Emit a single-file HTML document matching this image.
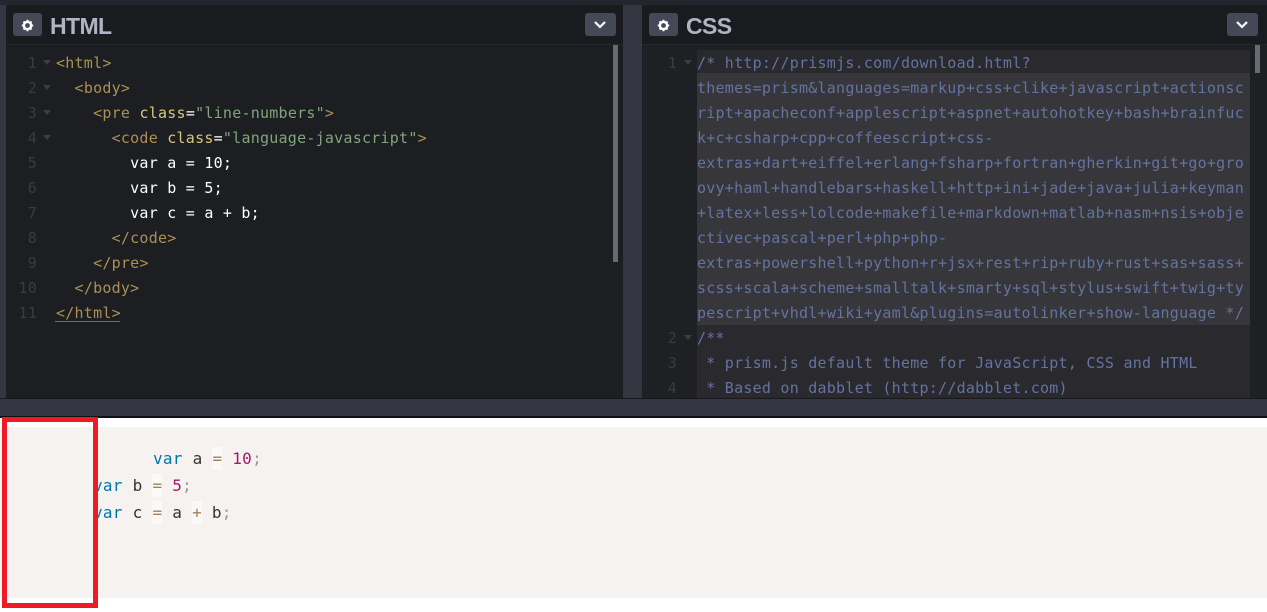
<!DOCTYPE html>
<html><head><meta charset="utf-8"><style>
html,body{margin:0;padding:0;width:1267px;height:612px;overflow:hidden;background:#fff}
div{position:absolute}
.c{font:15px/25px "DejaVu Sans Mono","Liberation Mono",monospace;letter-spacing:.24px;white-space:pre}
.n{width:40px;text-align:right;color:#3a3b42}
.t{color:#ac8f55}.a{color:#d5c77f}.v{color:#80a57c}.w{color:#fff}.e{color:#d0d0d0}
.m{color:#6472a0}
.f{width:0;height:0;border:4px solid transparent;border-top:5px solid #3c3d44;border-bottom:0}
.h{font:bold 23px/30px "Liberation Sans",sans-serif;color:#b0b3c2;letter-spacing:-.6px}
.b{background:#444857;border-radius:3px}
.p{font:16px/27px "DejaVu Sans Mono","Liberation Mono",monospace;letter-spacing:.27px;white-space:pre;color:#333}
.p i{font-style:normal;color:#a67f59;background:rgba(255,255,255,.5);padding:2px 0}
.p u{text-decoration:none;color:#07a}.p b{font-weight:normal;color:#a01a68}.p s{text-decoration:none;color:#999}
</style></head><body>
<div style="left:0;top:0;width:1267px;height:418px;background:#343642"></div>
<div style="left:6px;top:5px;width:617px;height:394px;background:#1d1e22"></div>
<div style="left:642px;top:5px;width:625px;height:394px;background:#1f2024"></div>
<div style="left:0;top:0;width:1267px;height:5px;background:#24262f"></div>
<div style="left:6px;top:5px;width:617px;height:39px;background:#1a1b1f;border-bottom:1px solid #26272c"></div>
<div style="left:642px;top:5px;width:625px;height:39px;background:#1a1b1f;border-bottom:1px solid #26272c"></div>
<div style="left:0;top:399px;width:1267px;height:17px;background:#343642;border-top:0"></div>
<div style="left:0;top:398px;width:1267px;height:1px;background:#17181b"></div>
<div style="left:0;top:416px;width:1267px;height:2px;background:#101114"></div>

<div class="b" style="left:13px;top:13px;width:29px;height:23px"></div>
<svg style="position:absolute;left:21px;top:19px" width="13" height="13" viewBox="0 0 13 13"><circle cx="6.5" cy="6.5" r="3.6" fill="none" stroke="#fff" stroke-width="2.4"/><path d="M6.5 0.8v2M6.5 10.2v2M0.8 6.5h2M10.2 6.5h2M2.5 2.5l1.4 1.4M9.1 9.1l1.4 1.4M2.5 10.5l1.4-1.4M9.1 3.9l1.4-1.4" stroke="#fff" stroke-width="2"/></svg>
<div class="h" style="left:50px;top:11px">HTML</div>
<div class="b" style="left:585px;top:13px;width:31px;height:23px"></div>
<svg style="position:absolute;left:593px;top:20px" width="14" height="9" viewBox="0 0 14 9"><path d="M2 2l5 5 5-5" fill="none" stroke="#fff" stroke-width="2.2"/></svg>

<div class="b" style="left:649px;top:13px;width:29px;height:23px"></div>
<svg style="position:absolute;left:657px;top:19px" width="13" height="13" viewBox="0 0 13 13"><circle cx="6.5" cy="6.5" r="3.6" fill="none" stroke="#fff" stroke-width="2.4"/><path d="M6.5 0.8v2M6.5 10.2v2M0.8 6.5h2M10.2 6.5h2M2.5 2.5l1.4 1.4M9.1 9.1l1.4 1.4M2.5 10.5l1.4-1.4M9.1 3.9l1.4-1.4" stroke="#fff" stroke-width="2"/></svg>
<div class="h" style="left:686px;top:11px">CSS</div>
<div class="b" style="left:1227px;top:13px;width:31px;height:23px"></div>
<svg style="position:absolute;left:1235px;top:20px" width="14" height="9" viewBox="0 0 14 9"><path d="M2 2l5 5 5-5" fill="none" stroke="#fff" stroke-width="2.2"/></svg>

<div class="c n" style="left:-3px;top:51px">1
2
3
4
5
6
7
8
9
10
11</div>
<div class="f" style="left:43px;top:60px"></div>
<div class="f" style="left:43px;top:85px"></div>
<div class="f" style="left:43px;top:110px"></div>
<div class="f" style="left:43px;top:135px"></div>
<div class="c" style="left:56px;top:51px"><span class="t">&lt;html&gt;</span>
  <span class="t">&lt;body&gt;</span>
    <span class="t">&lt;pre</span> <span class="a">class</span><span class="w">=</span><span class="v">"line-numbers"</span><span class="t">&gt;</span>
      <span class="t">&lt;code</span> <span class="a">class</span><span class="w">=</span><span class="v">"language-javascript"</span><span class="t">&gt;</span>
<span class="w">        var a = 10;
        var b = 5;
        var c = a + b;</span>
      <span class="t">&lt;/code&gt;</span>
    <span class="t">&lt;/pre&gt;</span>
  <span class="t">&lt;/body&gt;</span>
<span class="t">&lt;/html&gt;</span></div>
<div style="left:55px;top:321px;width:65px;height:1px;background:#6a6b70"></div>
<div style="left:613px;top:45px;width:5px;height:217px;background:#6a6b72"></div>

<div style="left:697px;top:50px;width:553px;height:348px;background:#2a2a2e"></div>
<div style="left:697px;top:73px;width:553px;height:252px;background:#37373b"></div>
<div style="left:1255px;top:45px;width:5px;height:28px;background:#6a6b72"></div>
<div class="c n" style="left:637px;top:51px;height:347px;overflow:hidden">1










2
3
4</div>
<div class="f" style="left:684px;top:60px"></div>
<div class="f" style="left:684px;top:335px"></div>
<div class="c m" style="left:697px;top:51px;height:347px;overflow:hidden">/* http://prismjs.com/download.html?
themes=prism&amp;languages=markup+css+clike+javascript+actionsc
ript+apacheconf+applescript+aspnet+autohotkey+bash+brainfuc
k+c+csharp+cpp+coffeescript+css-
extras+dart+eiffel+erlang+fsharp+fortran+gherkin+git+go+gro
ovy+haml+handlebars+haskell+http+ini+jade+java+julia+keyman
+latex+less+lolcode+makefile+markdown+matlab+nasm+nsis+obje
ctivec+pascal+perl+php+php-
extras+powershell+python+r+jsx+rest+rip+ruby+rust+sas+sass+
scss+scala+scheme+smalltalk+smarty+sql+stylus+swift+twig+ty
pescript+vhdl+wiki+yaml&amp;plugins=autolinker+show-language */
/**
 * prism.js default theme for JavaScript, CSS and HTML
 * Based on dabblet (http://dabblet.com)</div>

<div style="left:0;top:427px;width:1267px;height:171px;background:#f5f2f0"></div>
<div class="p" style="left:153px;top:445px"><u>var</u> a <i>=</i> <b>10</b><s>;</s></div>
<div class="p" style="left:93px;top:472px"><u>var</u> b <i>=</i> <b>5</b><s>;</s></div>
<div class="p" style="left:93px;top:499px"><u>var</u> c <i>=</i> a <i>+</i> b<s>;</s></div>
<div style="left:2px;top:417px;width:86px;height:181px;border:5px solid #ed1c24"></div>
</body></html>
